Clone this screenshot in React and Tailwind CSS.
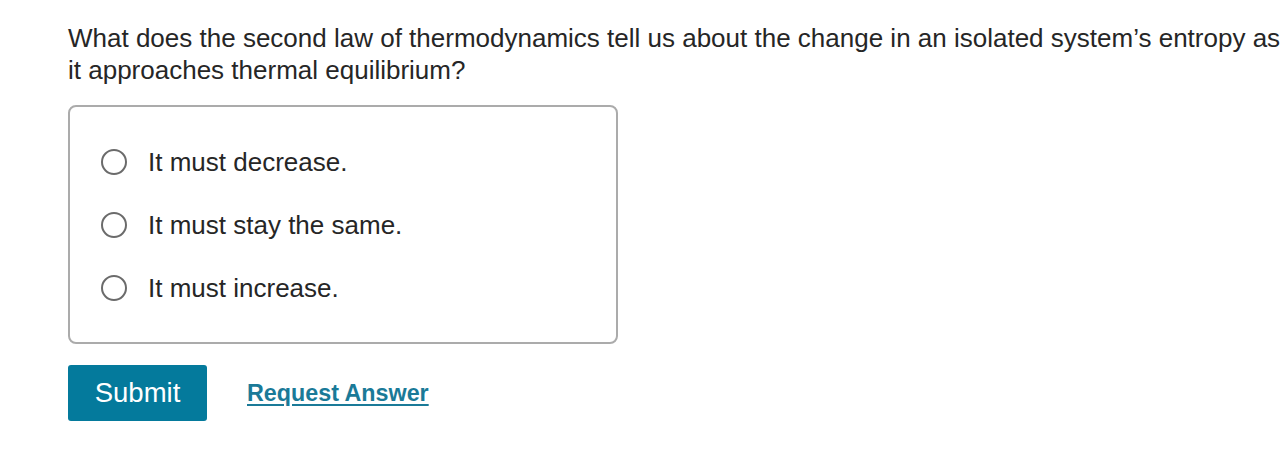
const choices = [
  { id: "a", label: "It must decrease." },
  { id: "b", label: "It must stay the same." },
  { id: "c", label: "It must increase." },
];

export default function App() {
  return (
    <div className="min-h-[460px] bg-white pl-[68px] pt-[22px] font-['Liberation_Sans',Arial,sans-serif] text-[#262626]">
      <p className="w-[1216px] text-[26px] leading-[32px]">
        What does the second law of thermodynamics tell us about the change in an isolated system’s entropy as it approaches thermal equilibrium?
      </p>

      <div className="mt-[19px] w-[550px] rounded-[8px] border-2 border-[#ababab] pt-[23px] pb-[23px] pl-[31px]">
        {choices.map((c) => (
          <label key={c.id} className="flex h-[63px] items-center gap-[21px]">
            <span className="h-[26px] w-[26px] shrink-0 rounded-full border-2 border-[#6b6b6b] bg-white" />
            <span className="text-[26px] leading-none">{c.label}</span>
          </label>
        ))}
      </div>

      <div className="mt-[21px] flex items-center gap-[40px]">
        <button className="h-[56px] w-[139px] rounded-[3px] bg-[#047a9c] text-[27.5px] text-white">
          Submit
        </button>
        <a href="#" className="text-[23.3px] font-bold text-[#1a7a98] underline underline-offset-[3px]">
          Request Answer
        </a>
      </div>
    </div>
  );
}
